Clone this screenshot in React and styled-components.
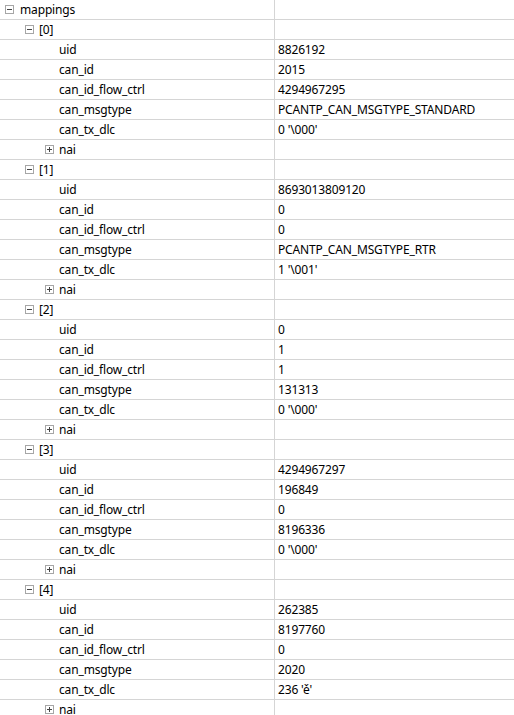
import React from 'react';
import styled, { createGlobalStyle } from 'styled-components';

const GlobalStyle = createGlobalStyle`
  html, body {
    margin: 0;
    padding: 0;
    background: #ffffff;
  }
  body {
    font-family: "Noto Sans", "Open Sans", "Liberation Sans", sans-serif;
    font-size: 12px;
    letter-spacing: -0.15px;
    color: #000000;
  }
`;

const Tree = styled.div`
  width: 514px;
  height: 715px;
  overflow: hidden;
  display: flex;
  flex-direction: column;
  background: #ffffff;
`;

const Row = styled.div`
  display: grid;
  grid-template-columns: 275px 1fr;
  height: 20px;
  flex: none;
  box-sizing: border-box;
  border-bottom: 1px solid #d5d5d5;
`;

const NameCell = styled.div`
  display: flex;
  align-items: center;
  box-sizing: border-box;
  border-right: 1px solid #d5d5d5;
  padding-left: ${({ level, leaf }) => (leaf ? 59 : 5 + level * 20)}px;
  white-space: nowrap;
  overflow: hidden;
`;

const ValueCell = styled.div`
  display: flex;
  align-items: center;
  padding-left: 3px;
  white-space: nowrap;
  overflow: hidden;
`;

const Toggle = styled.span`
  position: relative;
  width: 9px;
  height: 9px;
  box-sizing: border-box;
  border: 1px solid #a6a6a6;
  background: #ffffff;
  margin-right: ${({ level }) => (level === 0 ? 6 : 5)}px;
  flex: none;

  &::before {
    content: '';
    position: absolute;
    left: 1px;
    top: 3px;
    width: 5px;
    height: 1px;
    background: #444444;
  }

  &::after {
    content: '';
    position: absolute;
    left: 3px;
    top: 1px;
    width: 1px;
    height: 5px;
    background: #444444;
    display: ${({ open }) => (open ? 'none' : 'block')};
  }
`;

const Label = styled.span`
  line-height: 19px;
`;

const mappings = [
  { uid: '8826192', can_id: '2015', flow: '4294967295', msg: 'PCANTP_CAN_MSGTYPE_STANDARD', dlc: "0 '\\000'" },
  { uid: '8693013809120', can_id: '0', flow: '0', msg: 'PCANTP_CAN_MSGTYPE_RTR', dlc: "1 '\\001'" },
  { uid: '0', can_id: '1', flow: '1', msg: '131313', dlc: "0 '\\000'" },
  { uid: '4294967297', can_id: '196849', flow: '0', msg: '8196336', dlc: "0 '\\000'" },
  { uid: '262385', can_id: '8197760', flow: '0', msg: '2020', dlc: "236 'ě'" },
];

function TreeRow({ level, name, value, toggle, open }) {
  return (
    <Row>
      <NameCell level={level} leaf={!toggle}>
        {toggle && <Toggle level={level} open={open} />}
        <Label>{name}</Label>
      </NameCell>
      <ValueCell>{value && <Label>{value}</Label>}</ValueCell>
    </Row>
  );
}

export default function App() {
  return (
    <>
      <GlobalStyle />
      <Tree>
        <TreeRow level={0} name="mappings" toggle open />
        {mappings.map((m, i) => (
          <React.Fragment key={i}>
            <TreeRow level={1} name={`[${i}]`} toggle open />
            <TreeRow level={2} name="uid" value={m.uid} />
            <TreeRow level={2} name="can_id" value={m.can_id} />
            <TreeRow level={2} name="can_id_flow_ctrl" value={m.flow} />
            <TreeRow level={2} name="can_msgtype" value={m.msg} />
            <TreeRow level={2} name="can_tx_dlc" value={m.dlc} />
            <TreeRow level={2} name="nai" toggle />
          </React.Fragment>
        ))}
      </Tree>
    </>
  );
}
